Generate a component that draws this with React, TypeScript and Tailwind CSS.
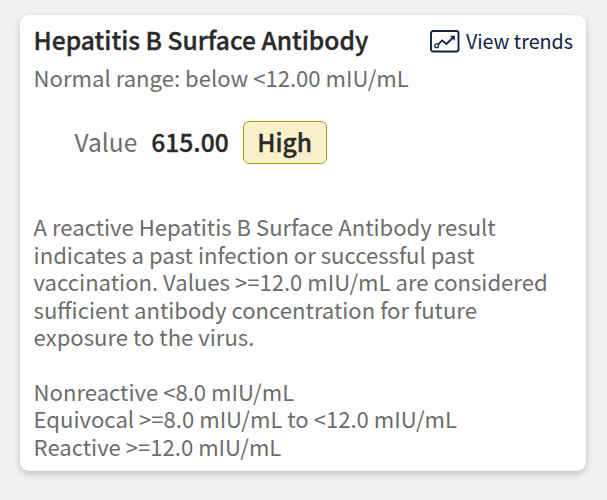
import type { ReactNode } from "react";

function TrendsIcon() {
  return (
    <svg className="mt-0.5 h-[23px] w-[30px] shrink-0" viewBox="0 0 30 23" fill="none" stroke="currentColor">
      <rect x="1" y="1" width="27.5" height="20.5" rx="2.2" strokeWidth="1.9" />
      <circle cx="6.7" cy="15.8" r="1.9" strokeWidth="1.3" />
      <path d="M8.2 14.3L12.2 10.4l4.2 3.6L22.6 8" strokeWidth="1.8" />
      <path d="M20.400 6h4.200v4.200z" fill="currentColor" strokeWidth="0.5" />
    </svg>
  );
}

function Line({ children }: { children: ReactNode }) {
  return <span className="block whitespace-nowrap">{children}</span>;
}

export default function App() {
  return (
    <div className="h-[500px] w-[607px] bg-[#f0f2f1] pt-[15px] pl-5 font-['Noto_Sans_CJK_SC','Noto_Sans',sans-serif] text-[#6d6d6d]">
      <div className="h-[456px] w-[566px] rounded-[9px] bg-white pr-[13px] pl-[13.6px] shadow-[0_3px_7px_rgba(0,0,0,0.2)]">
        <div className="flex h-[51px] items-center justify-between">
          <h1 className="mb-0.5 text-[24.6px] font-medium whitespace-nowrap text-[#2a2a2a] [-webkit-text-stroke:0.35px_#2a2a2a]">
            Hepatitis B Surface Antibody
          </h1>
          <a className="flex items-center gap-[6px] text-[19.7px] whitespace-nowrap text-[#0f2347]">
            <TrendsIcon />
            View trends
          </a>
        </div>
        <p className="h-[26px] text-[22.1px] leading-[22px] whitespace-nowrap">Normal range: below &lt;12.00 mIU/mL</p>
        <div className="mt-[29px] flex h-[43px] items-center pl-[41px]">
          <span className="mb-0.5 text-[24.5px] leading-[41px]">Value</span>
          <span className="mb-0.5 ml-[14px] text-[24.6px] leading-[41px] font-medium text-[#2a2a2a] [-webkit-text-stroke:0.35px_#2a2a2a]">
            615.00
          </span>
          <span className="ml-[14px] flex h-[43px] w-[84px] items-center justify-center rounded-md border border-[#aa9a20] bg-[#f9f1cc] pb-0.5 text-[24.6px] leading-none font-medium text-[#2a2a2a] [-webkit-text-stroke:0.35px_#2a2a2a]">
            High
          </span>
        </div>
        <div className="mt-[49.4px] text-[22.1px] leading-[27.4px]">
          <Line>A reactive Hepatitis B Surface Antibody result</Line>
          <Line>indicates a past infection or successful past</Line>
          <Line>vaccination. Values &gt;=12.0 mIU/mL are considered</Line>
          <Line>sufficient antibody concentration for future</Line>
          <Line>exposure to the virus.</Line>
          <Line>&nbsp;</Line>
          <Line>Nonreactive &lt;8.0 mIU/mL</Line>
          <Line>Equivocal &gt;=8.0 mIU/mL to &lt;12.0 mIU/mL</Line>
          <Line>Reactive &gt;=12.0 mIU/mL</Line>
        </div>
      </div>
    </div>
  );
}
